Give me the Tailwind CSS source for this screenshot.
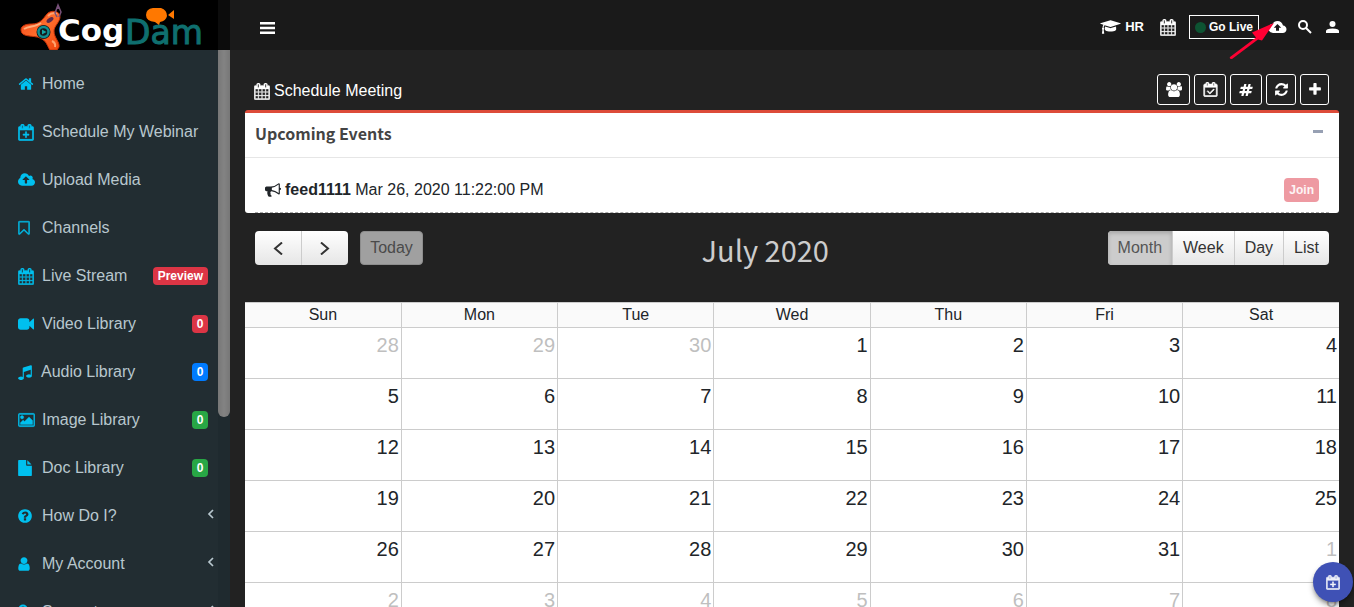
<!DOCTYPE html>
<html lang="en">
<head>
<meta charset="utf-8">
<title>CogDam - Schedule Meeting</title>
<script src="https://cdn.jsdelivr.net/npm/@tailwindcss/browser@4"></script>
</head>
<body class="relative flex h-screen flex-col overflow-hidden bg-[#222222] font-['Liberation_Sans',sans-serif] text-base text-[#212529]">
<svg class="hidden">
  <symbol id="home" viewBox="0 0 1792 1792"><path d="M1472 992v480q0 26-19 45t-45 19h-384v-384h-256v384h-384q-26 0-45-19t-19-45v-480q0-1 .5-3t.5-3l575-474 575 474q1 2 1 6zm223-69l-62 74q-8 9-21 11h-3q-13 0-21-7l-692-577-692 577q-12 8-24 7-13-2-21-11l-62-74q-8-10-7-23.5t11-21.5l719-599q32-26 76-26t76 26l244 204v-195q0-14 9-23t23-9h192q14 0 23 9t9 23v408l219 182q10 8 11 21.5t-7 23.5z"/></symbol>
  <symbol id="cal" viewBox="44 0 1704 1812"><path stroke="currentColor" stroke-width="40" d="M192 1664h288v-288h-288v288zm352 0h320v-288h-320v288zm-352-352h288v-320h-288v320zm352 0h320v-320h-320v320zm-352-384h288v-288h-288v288zm736 736h320v-288h-320v288zm-384-736h320v-288h-320v288zm768 736h288v-288h-288v288zm-384-352h320v-320h-320v320zm-352-864v-288q0-13-9.5-22.5t-22.5-9.5h-64q-13 0-22.5 9.5t-9.5 22.5v288q0 13 9.5 22.5t22.5 9.5h64q13 0 22.5-9.5t9.5-22.5zm736 864h288v-320h-288v320zm-384-384h320v-288h-320v288zm384 0h288v-288h-288v288zm32-480v-288q0-13-9.5-22.5t-22.5-9.5h-64q-13 0-22.5 9.5t-9.5 22.5v288q0 13 9.5 22.5t22.5 9.5h64q13 0 22.5-9.5t9.5-22.5zm384-64v1280q0 52-38 90t-90 38h-1408q-52 0-90-38t-38-90v-1280q0-52 38-90t90-38h128v-96q0-66 47-113t113-47h64q66 0 113 47t47 113v96h384v-96q0-66 47-113t113-47h64q66 0 113 47t47 113v96h128q52 0 90 38t38 90z"/></symbol>
  <symbol id="calplus" viewBox="24 0 1744 1832"><path stroke="currentColor" stroke-width="70" fill-rule="evenodd" d="M1600 256q52 0 90 38t38 90v1280q0 52-38 90t-90 38h-1408q-52 0-90-38t-38-90v-1280q0-52 38-90t90-38h128v-96q0-66 47-113t113-47h64q66 0 113 47t47 113v96h384v-96q0-66 47-113t113-47h64q66 0 113 47t47 113v96zM192 640v1024h1408v-1024zM448 128v320h128v-320zM1216 128v320h128v-320zM832 832h128v256h256v128h-256v256h-128v-256h-256v-128h256z"/></symbol>
  <symbol id="calcheck" viewBox="24 0 1744 1832"><path stroke="currentColor" stroke-width="70" fill-rule="evenodd" d="M1600 256q52 0 90 38t38 90v1280q0 52-38 90t-90 38h-1408q-52 0-90-38t-38-90v-1280q0-52 38-90t90-38h128v-96q0-66 47-113t113-47h64q66 0 113 47t47 113v96h384v-96q0-66 47-113t113-47h64q66 0 113 47t47 113v96zM192 640v1024h1408v-1024zM448 128v320h128v-320zM1216 128v320h128v-320zM1303 864l46 46q19 22 0 45l-506 506q-22 19-45 0l-294-294q-19-22 0-45l46-46q22-19 45 0l225 225 437-437q22-19 46 0z"/></symbol>
  <symbol id="cloud" viewBox="-64 0 1920 1792"><path d="M1216 864q0-14-9-23l-352-352q-9-9-23-9t-23 9l-351 351q-10 12-10 24 0 14 9 23t23 9h224v352q0 13 9.500 22.500t22.500 9.500h192q13 0 22.500-9.500t9.500-22.500v-352h224q13 0 22.500-9.500t9.500-22.500zm640 288q0 159-112.500 271.500t-271.500 112.500h-1088q-185 0-316.500-131.500t-131.500-316.500q0-130 70-240t188-165q-2-30-2-43 0-212 150-362t362-150q156 0 285.500 87t188.500 231q71-62 166-62 106 0 181 75t75 181q0 76-41 138 130 31 213.500 135.500t83.500 238.500z"/></symbol>
  <symbol id="bookmark" viewBox="236 0 1320 1792"><path stroke="currentColor" stroke-width="40" d="M1408 256h-1024v1242l423-406 89-85 89 85 423 406v-1242zm12-128q23 0 44 9 33 13 52.500 41t19.500 62v1289q0 34-19.500 62t-52.500 41q-19 8-44 8-48 0-83-32l-441-424-441 424q-36 33-83 33-23 0-44-9-33-13-52.500-41t-19.500-62v-1289q0-34 19.500-62t52.500-41q21-9 44-9h1048z"/></symbol>
  <symbol id="video" viewBox="0 0 1792 1792"><path d="M1792 352v1088q0 42-39 59-13 5-25 5-27 0-45-19l-403-403v166q0 119-84.500 203.500t-203.500 84.500h-704q-119 0-203.500-84.500t-84.500-203.500v-704q0-119 84.500-203.500t203.500-84.500h704q119 0 203.500 84.500t84.500 203.500v165l403-402q18-19 45-19 12 0 25 5 39 17 39 59z"/></symbol>
  <symbol id="music" viewBox="128 0 1536 1792"><path d="M1664 224v1120q0 50-34 89t-86 60.500-103.500 32-96.500 10.500-96.500-10.500-103.500-32-86-60.500-34-89 34-89 86-60.500 103.500-32 96.500-10.500q105 0 192 39v-537l-768 237v709q0 50-34 89t-86 60.500-103.500 32-96.500 10.500-96.500-10.500-103.500-32-86-60.500-34-89 34-89 86-60.500 103.500-32 96.500-10.500q105 0 192 39v-967q0-31 19-56.500t49-35.500l832-256q12-4 28-4 40 0 68 28t28 68z"/></symbol>
  <symbol id="image" viewBox="-84 0 1960 1792"><path stroke="currentColor" stroke-width="40" d="M576 576q0 80-56 136t-136 56-136-56-56-136 56-136 136-56 136 56 56 136zm1024 384v448h-1408v-192l320-320 160 160 512-512zm96-704h-1600q-13 0-22.500 9.500t-9.500 22.500v1216q0 13 9.500 22.500t22.500 9.500h1600q13 0 22.500-9.500t9.500-22.500v-1216q0-13-9.500-22.500t-22.500-9.500zm160 32v1216q0 66-47 113t-113 47h-1600q-66 0-113-47t-47-113v-1216q0-66 47-113t113-47h1600q66 0 113 47t47 113z"/></symbol>
  <symbol id="file" viewBox="128 0 1536 1792"><path d="M1152 512v-472q22 14 36 28l408 408q14 14 28 36h-472zm-128 32q0 40 28 68t68 28h544v1056q0 40-28 68t-68 28h-1344q-40 0-68-28t-28-68v-1600q0-40 28-68t68-28h800v544z"/></symbol>
  <symbol id="question" viewBox="128 0 1536 1792"><path d="M1024 1376v-192q0-14-9-23t-23-9h-192q-14 0-23 9t-9 23v192q0 14 9 23t23 9h192q14 0 23-9t9-23zm256-672q0-88-55.500-163t-138.500-116-170-41q-243 0-371 213-15 24 8 42l132 100q7 6 19 6 16 0 25-12 53-68 86-92 34-24 86-24 48 0 85.500 26t37.500 59q0 38-20 61t-68 45q-63 28-115.500 86.500t-52.500 125.500v36q0 14 9 23t23 9h192q14 0 23-9t9-23q0-19 21.500-49.500t54.500-49.500q32-18 49-28.500t46-35 44.500-48 28-60.500 12.500-81zm384 192q0 209-103 385.500t-279.500 279.500-385.500 103-385.500-103-279.500-279.500-103-385.500 103-385.500 279.500-279.500 385.500-103 385.500 103 279.500 279.500 103 385.500z"/></symbol>
  <symbol id="user" viewBox="256 0 1280 1792"><path d="M1536 1399q0 109-62.500 187t-150.500 78h-854q-88 0-150.500-78t-62.500-187q0-85 8.500-160.500t31.500-152 58.500-131 94-89 134.500-34.500q131 128 313 128t313-128q76 0 134.500 34.500t94 89 58.500 131 31.500 152 8.500 160.500zm-256-887q0 159-112.500 271.500t-271.500 112.500-271.500-112.500-112.500-271.500 112.500-271.500 271.500-112.500 271.500 112.500 112.500 271.500z"/></symbol>
  <symbol id="refresh" viewBox="128 0 1536 1792"><path d="M1639 1056q0 5-1 7-64 268-268 434.500t-478 166.500q-146 0-282.500-55t-243.500-157l-129 129q-19 19-45 19t-45-19-19-45v-448q0-26 19-45t45-19h448q26 0 45 19t19 45-19 45l-137 137q71 66 161 102t187 36q134 0 250-65t186-179q11-17 53-117 8-23 30-23h192q13 0 22.500 9.500t9.500 22.500zm25-800v448q0 26-19 45t-45 19h-448q-26 0-45-19t-19-45 19-45l138-138q-148-137-349-137-134 0-250 65t-186 179q-11 17-53 117-8 23-30 23h-199q-13 0-22.500-9.500t-9.500-22.500v-7q65-268 270-434.500t480-166.500q146 0 284 55.500t245 156.500l130-129q19-19 45-19t45 19 19 45z"/></symbol>
  <symbol id="plus" viewBox="192 0 1408 1792"><path d="M1600 736v192q0 40-28 68t-68 28h-416v416q0 40-28 68t-68 28h-192q-40 0-68-28t-28-68v-416h-416q-40 0-68-28t-28-68v-192q0-40 28-68t68-28h416v-416q0-40 28-68t68-28h192q40 0 68 28t28 68v416h416q40 0 68 28t28 68z"/></symbol>
  <symbol id="hash" viewBox="0 0 1792 1792"><path d="M991 1024l64-256h-254l-64 256h254zm768-504l-56 224q-7 24-31 24h-327l-64 256h311q15 0 25 12 10 14 6 28l-56 224q-5 24-31 24h-327l-81 328q-7 24-31 24h-224q-16 0-26-12-9-12-6-28l78-312h-254l-81 328q-7 24-31 24h-225q-15 0-25-12-9-12-6-28l78-312h-311q-15 0-25-12-9-12-6-28l56-224q7-24 31-24h327l64-256h-311q-15 0-25-12-10-14-6-28l56-224q5-24 31-24h327l81-328q7-24 32-24h224q15 0 25 12 9 12 6 28l-78 312h254l81-328q7-24 32-24h224q15 0 25 12 9 12 6 28l-78 312h311q15 0 25 12 9 12 6 28z"/></symbol>
  <symbol id="users" viewBox="-64 0 1920 1792"><path d="M529 896q-162 5-265 128h-134q-82 0-138-40.500t-56-118.500q0-353 124-353 6 0 43.500 21t97.500 42.500 119 21.500q67 0 133-23-5 37-5 66 0 159 93 293zm1071 637q0 120-73 189.500t-194 69.500h-874q-121 0-194-69.500t-73-189.500q0-53 3.500-103.500t14-109 26.500-108.500 43-97.500 62-81 85.500-53.500 111.500-20q10 0 43 21.500t73 48 107 48 135 21.500 135-21.500 107-48 73-48 43-21.500q61 0 111.500 20t85.500 53.500 62 81 43 97.500 26.500 108.500 14 109 3.500 103.500zm-1024-1277q0 106-75 181t-181 75-181-75-75-181 75-181 181-75 181 75 75 181zm704 384q0 159-112.500 271.500t-271.500 112.500-271.500-112.500-112.500-271.500 112.500-271.500 271.500-112.500 271.500 112.500 112.500 271.500zm576 225q0 78-56 118.500t-138 40.500h-134q-103-123-265-128 93-134 93-293 0-29-5-66 66 23 133 23 59 0 119-21.500t97.500-42.500 43.500-21q124 0 124 353zm-128-609q0 106-75 181t-181 75-181-75-75-181 75-181 181-75 181 75 75 181z"/></symbol>
  <symbol id="horn" viewBox="0 0 1792 1792"><path d="M1664 640q53 0 90.500 37.500t37.500 90.500-37.500 90.500-90.500 37.500v384q0 52-38 90t-90 38q-417-347-812-380-58 19-91 66t-31 100.500 40 92.500q-20 33-23 65.500t6 58 33.500 55 48 50 61.500 50.500q-29 58-111.500 83t-168.500 11.500-132-55.500q-7-23-29.500-87.500t-32-94.500-23-89-15-101 3.500-98.500 22-110.500h-122q-66 0-113-47t-47-113v-192q0-66 47-113t113-47h480q435 0 896-384 52 0 90 38t38 90v384zm-128 604v-954q-394 302-768 343v270q377 42 768 341z"/></symbol>
  <symbol id="cap" viewBox="0 0 2304 1792"><path d="M1774 836l18 320q4 69-82 128t-235 93.500-323 34.500-323-34.500-235-93.500-82-128l18-320 574 181q22 7 48 7t48-7zm530-324q0 23-22 31l-1120 352q-4 1-10 1t-10-1l-652-206q-43 34-71 111.500t-34 178.500q63 36 63 109 0 69-58 107l58 433q2 14-8 25-9 11-24 11h-192q-15 0-24-11-10-11-8-25l58-433q-58-38-58-107 0-73 65-111 11-207 98-330l-333-104q-22-8-22-31t22-31l1120-352q4-1 10-1t10 1l1120 352q22 8 22 31z"/></symbol>
</svg>

<header class="flex h-[50px] shrink-0 items-center bg-[#1a1a1a] text-white">
  <a href="#" aria-label="CogDam" class="flex h-full w-[230px] shrink-0 bg-black">
    <svg class="h-[50px] w-[230px]" viewBox="0 0 230 50">
      <defs>
        <linearGradient id="fid" x1="0" y1="0" x2="1" y2="1"><stop offset="0" stop-color="#f5481c"/><stop offset=".5" stop-color="#ff6d2c"/><stop offset="1" stop-color="#f0440c"/></linearGradient>
      </defs>
      <path d="M218 0h12v50h-12z" fill="#0c0c0c"/>
      <path d="M21 30C21 25 27 24 32 24C40 24 43 19 47 14C50 10 60 10 60 17C60 22 54 26 54 31C54 38 60 42 59 47L57 50H50C47 46 47 41 40 38C34 35 21 38 21 30Z" fill="url(#fid)" stroke="#c63208"/>
      <path d="M24 29C29 26 36 27 41 23" fill="none" stroke="#ffae7c" stroke-width="2"/>
      <path d="M48 16Q52 12 57 14M52 41Q56 43 55 47" fill="none" stroke="#ffa26e" stroke-width="2"/>
      <ellipse cx="50" cy="20" rx="4" ry="2" transform="rotate(-35 50 20)" fill="#5b2a4a"/>
      <path d="M57 17L55 13L58 5L61 12L59 17M58 5V9" fill="none" stroke="#765078" stroke-width="1.500"/>
      <circle cx="43.500" cy="32" r="7" fill="#10191c"/>
      <circle cx="43.500" cy="32" r="5" fill="#151a1c" stroke="#128e91" stroke-width="2.500"/>
      <path d="M42 29.500l4.500 2.500-4.500 2.500z" fill="#14a5a5"/>
      <text x="58" y="41" class="fill-white font-['DejaVu_Sans',sans-serif] text-[31px] font-bold">Cog</text>
      <text x="125" y="44" class="fill-[#0f6f6f] stroke-[#0f6f6f] font-['DejaVu_Sans',sans-serif] text-[33px]">Dam</text>
      <path d="M153 8h8q6 2 6 8q-1 5-7 6l-1 3-4-3q-9-1-9-7 0-6 7-7zM168 15l6-5v9z" fill="#ff7800"/>
    </svg>
  </a>
  <button aria-label="Toggle menu" class="ml-[30px] pt-[6px]"><svg class="block h-3 w-[15px]" viewBox="0 0 15 12" fill="white"><path d="M0 0h15v2.500H0zM0 4.700h15v2.500H0zM0 9.500h15v2.500H0z"/></svg></button>
  <nav class="ml-auto flex items-center pt-1 pr-[15px] text-[13px] font-bold">
    <a href="#" class="flex items-center gap-1"><svg class="h-4 w-[21px]" fill="currentColor"><use href="#cap"/></svg>HR</a>
    <a href="#" aria-label="Calendar" class="ml-4"><svg class="h-[17px] w-4" fill="currentColor"><use href="#cal"/></svg></a>
    <button class="ml-[13px] flex h-6 w-[70px] items-center justify-between border border-white px-[5px] text-xs font-bold"><span class="size-[11px] rounded-full bg-[#0d5332]"></span>Go Live</button>
    <a href="#" aria-label="Upload" class="ml-[9px]"><svg class="h-[18px] w-[19px]" viewBox="0 0 24 24" fill="currentColor"><path d="M19.350 10.040C18.670 6.590 15.640 4 12 4 9.110 4 6.600 5.640 5.350 8.040 2.340 8.360 0 10.910 0 14c0 3.310 2.690 6 6 6h13c2.760 0 5-2.240 5-5 0-2.640-2.050-4.780-4.650-4.960zM14 13v4h-4v-4H7l5-5 5 5h-3z"/></svg></a>
    <button aria-label="Search" class="ml-[11px]"><svg class="size-[14px]" viewBox="0 0 14 14" fill="none" stroke="currentColor" stroke-width="2"><circle cx="5" cy="5" r="4"/><path d="M8 8l5 5"/></svg></button>
    <button aria-label="Account" class="ml-[14px]"><svg class="h-3 w-[13px]" viewBox="0 0 13 12" fill="currentColor"><circle cx="6.500" cy="3" r="3"/><path d="M0 12v-2q0-2.500 6.500-2.500t6.500 2.500v2z"/></svg></button>
  </nav>
</header>

<div class="flex min-h-0 flex-1">
  <aside class="flex w-[230px] shrink-0 overflow-hidden bg-[#222d32]">
    <nav class="min-w-0 flex-1 overflow-hidden pt-[10px] text-[#b8c7ce]">
      <a href="#" class="flex h-12 items-center gap-2 pl-[18px] pr-[10px]"><svg class="h-4 w-4 text-[#00c0ef]" fill="currentColor"><use href="#home"/></svg>Home</a>
      <a href="#" class="flex h-12 items-center gap-2 pl-[18px] pr-[10px]"><svg class="h-[17px] w-4 text-[#00c0ef]" fill="currentColor"><use href="#calplus"/></svg>Schedule My Webinar</a>
      <a href="#" class="flex h-12 items-center gap-[7px] pl-[18px] pr-[10px]"><svg class="h-4 w-[17px] text-[#00c0ef]" fill="currentColor"><use href="#cloud"/></svg>Upload Media</a>
      <a href="#" class="flex h-12 items-center gap-3 pl-[18px] pr-[10px]"><svg class="h-4 w-3 text-[#00c0ef]" fill="currentColor"><use href="#bookmark"/></svg>Channels</a>
      <a href="#" class="flex h-12 items-center gap-2 pl-[18px] pr-[10px]"><svg class="h-[17px] w-4 text-[#00c0ef]" fill="currentColor"><use href="#cal"/></svg>Live Stream<span class="ml-auto h-[18px] rounded bg-[#dc3545] px-[5px] text-xs leading-[18px] font-bold text-white">Preview</span></a>
      <a href="#" class="flex h-12 items-center gap-2 pl-[18px] pr-[10px]"><svg class="h-4 w-4 text-[#00c0ef]" fill="currentColor"><use href="#video"/></svg>Video Library<span class="ml-auto h-[18px] w-4 rounded bg-[#dc3545] text-center text-xs leading-[18px] font-bold text-white">0</span></a>
      <a href="#" class="flex h-12 items-center gap-[9px] pl-[18px] pr-[10px]"><svg class="h-4 w-[14px] text-[#00c0ef]" fill="currentColor"><use href="#music"/></svg>Audio Library<span class="ml-auto h-[18px] w-4 rounded bg-[#007bff] text-center text-xs leading-[18px] font-bold text-white">0</span></a>
      <a href="#" class="flex h-12 items-center gap-[7px] pl-[18px] pr-[10px]"><svg class="h-4 w-[17px] text-[#00c0ef]" fill="currentColor"><use href="#image"/></svg>Image Library<span class="ml-auto h-[18px] w-4 rounded bg-[#28a745] text-center text-xs leading-[18px] font-bold text-white">0</span></a>
      <a href="#" class="flex h-12 items-center gap-[10px] pl-[18px] pr-[10px]"><svg class="h-4 w-[14px] text-[#00c0ef]" fill="currentColor"><use href="#file"/></svg>Doc Library<span class="ml-auto h-[18px] w-4 rounded bg-[#28a745] text-center text-xs leading-[18px] font-bold text-white">0</span></a>
      <a href="#" class="flex h-12 items-center gap-[10px] pl-[18px] pr-1"><svg class="h-4 w-[14px] text-[#00c0ef]" fill="currentColor"><use href="#question"/></svg>How Do I?<svg class="mb-1 ml-auto h-[10px] w-[7px]" viewBox="0 0 7 10" fill="none" stroke="currentColor" stroke-width="1.700"><path d="M6 1L2 5l4 4"/></svg></a>
      <a href="#" class="flex h-12 items-center gap-3 pl-[18px] pr-1"><svg class="h-4 w-3 text-[#00c0ef]" fill="currentColor"><use href="#user"/></svg>My Account<svg class="mb-1 ml-auto h-[10px] w-[7px]" viewBox="0 0 7 10" fill="none" stroke="currentColor" stroke-width="1.700"><path d="M6 1L2 5l4 4"/></svg></a>
      <a href="#" class="flex h-12 items-center gap-[14px] pl-[18px] pr-1"><svg class="h-4 w-[10px] text-[#00c0ef]" viewBox="0 0 10 16" fill="none" stroke="currentColor" stroke-width="2"><circle cx="5" cy="5" r="3.500"/><path d="M5 8v7"/></svg>Support<svg class="mb-1 ml-auto h-[10px] w-[7px]" viewBox="0 0 7 10" fill="none" stroke="currentColor" stroke-width="1.700"><path d="M6 1L2 5l4 4"/></svg></a>
    </nav>
    <div class="w-3 shrink-0 bg-[#1f2a2f]"><div class="h-[367px] rounded-b-md bg-linear-to-r from-[#777777] via-[#838383] to-[#777777]"></div></div>
  </aside>

  <main class="min-w-0 flex-1 overflow-hidden pl-[15px] pr-[15px] pt-6">
    <div class="flex h-9 items-start justify-between pl-[9px] pr-[10px]">
      <h1 class="flex items-center gap-1 pt-[5px] text-white"><svg class="h-[17px] w-4" fill="currentColor"><use href="#cal"/></svg>Schedule Meeting</h1>
      <div class="flex gap-1 text-white">
        <button aria-label="Groups" class="flex h-[31px] w-[33px] items-center justify-center rounded-[3px] border border-white"><svg class="h-[15px] w-4" fill="currentColor"><use href="#users"/></svg></button>
        <button aria-label="Schedule" class="flex h-[31px] w-8 items-center justify-center rounded-[3px] border border-white"><svg class="h-[15px] w-[15px]" fill="currentColor"><use href="#calcheck"/></svg></button>
        <button aria-label="Channels" class="flex h-[31px] w-8 items-center justify-center rounded-[3px] border border-white"><svg class="h-[14px] w-[14px]" fill="currentColor"><use href="#hash"/></svg></button>
        <button aria-label="Refresh" class="flex h-[31px] w-[30px] items-center justify-center rounded-[3px] border border-white"><svg class="h-[15px] w-[13px]" fill="currentColor"><use href="#refresh"/></svg></button>
        <button aria-label="Add" class="flex h-[31px] w-[29px] items-center justify-center rounded-[3px] border border-white"><svg class="h-[15px] w-3" fill="currentColor"><use href="#plus"/></svg></button>
      </div>
    </div>

    <section class="rounded-[3px] border-t-[3px] border-[#dd4b39] bg-white">
      <div class="flex h-[45px] items-center justify-between border-b border-[#e6e6e6] pb-1 pl-[10px] pr-4">
        <h2 class="font-['Noto_Sans_CJK_SC',sans-serif] text-base font-bold text-[#444444]">Upcoming Events</h2>
        <button aria-label="Collapse" class="mb-1 h-[3px] w-[10px] bg-[#97a0b3]"></button>
      </div>
      <div class="mx-[10px] flex h-[55px] items-center border-b border-dashed border-[#aaaaaa] px-[10px] pt-[9px]">
        <svg class="mr-1 h-4 w-4" fill="currentColor"><use href="#horn"/></svg>
        <p><strong>feed1111</strong> Mar 26, 2020 11:22:00 PM</p>
        <button class="ml-auto h-6 rounded bg-[#ee9aa2] px-[5px] text-xs font-bold text-white/90">Join</button>
      </div>
    </section>

    <div class="mt-[18px] flex h-[34px] items-center justify-between px-[10px] text-[#333333]">
      <div class="flex">
        <div class="flex h-[34px] w-[93px] overflow-hidden rounded bg-linear-to-b from-white to-[#e6e6e6]">
          <button aria-label="Previous month" class="flex flex-1 items-center justify-center border-r border-[#cccccc]"><svg class="h-[13px] w-[10px]" viewBox="0 0 10 13" fill="none" stroke="currentColor" stroke-width="2"><path d="M9 .5L2 6.500l7 6"/></svg></button>
          <button aria-label="Next month" class="flex flex-1 items-center justify-center"><svg class="h-[13px] w-[10px]" viewBox="0 0 10 13" fill="none" stroke="currentColor" stroke-width="2"><path d="M1 .5l7 6-7 6"/></svg></button>
        </div>
        <button class="ml-3 h-[34px] w-[63px] rounded border border-[#8d8d8d] bg-[#a0a0a0] text-[#4a4a4a]">Today</button>
      </div>
      <h2 class="pt-[2px] font-['Noto_Sans_CJK_SC',sans-serif] text-[29px] leading-[34px] text-[#cccccc]">July 2020</h2>
      <div class="flex">
        <div class="flex h-[34px] divide-x divide-[#cccccc] overflow-hidden rounded bg-linear-to-b from-white to-[#e6e6e6]">
          <button class="bg-[#cccccc] px-[10px] text-[#555555] shadow-[inset_0_2px_4px_rgba(0,0,0,0.2)]">Month</button>
          <button class="px-[10px]">Week</button>
          <button class="px-[10px]">Day</button>
          <button class="px-[10px]">List</button>
        </div>
      </div>
    </div>

    <table class="mt-[37px] w-full table-fixed border-collapse bg-white text-right text-xl">
      <thead class="bg-[#fafafa] text-center text-base">
        <tr class="h-[25px] divide-x divide-[#cccccc] border-y border-[#cccccc]"><th class="p-0 font-normal leading-6">Sun</th><th class="p-0 font-normal leading-6">Mon</th><th class="p-0 font-normal leading-6">Tue</th><th class="p-0 font-normal leading-6">Wed</th><th class="p-0 font-normal leading-6">Thu</th><th class="p-0 font-normal leading-6">Fri</th><th class="p-0 font-normal leading-6">Sat</th></tr>
      </thead>
      <tbody class="align-top">
        <tr class="h-[51px] divide-x divide-[#cccccc] border-b border-[#cccccc]"><td class="pt-[3px] pr-[2px] text-[#bfbfbf]">28</td><td class="pt-[3px] pr-[2px] text-[#bfbfbf]">29</td><td class="pt-[3px] pr-[2px] text-[#bfbfbf]">30</td><td class="pt-[3px] pr-[2px]">1</td><td class="pt-[3px] pr-[2px]">2</td><td class="pt-[3px] pr-[2px]">3</td><td class="pt-[3px] pr-[2px]">4</td></tr>
        <tr class="h-[51px] divide-x divide-[#cccccc] border-b border-[#cccccc]"><td class="pt-[3px] pr-[2px]">5</td><td class="pt-[3px] pr-[2px]">6</td><td class="pt-[3px] pr-[2px]">7</td><td class="pt-[3px] pr-[2px]">8</td><td class="pt-[3px] pr-[2px]">9</td><td class="pt-[3px] pr-[2px]">10</td><td class="pt-[3px] pr-[2px]">11</td></tr>
        <tr class="h-[51px] divide-x divide-[#cccccc] border-b border-[#cccccc]"><td class="pt-[3px] pr-[2px]">12</td><td class="pt-[3px] pr-[2px]">13</td><td class="pt-[3px] pr-[2px]">14</td><td class="pt-[3px] pr-[2px]">15</td><td class="pt-[3px] pr-[2px]">16</td><td class="pt-[3px] pr-[2px]">17</td><td class="pt-[3px] pr-[2px]">18</td></tr>
        <tr class="h-[51px] divide-x divide-[#cccccc] border-b border-[#cccccc]"><td class="pt-[3px] pr-[2px]">19</td><td class="pt-[3px] pr-[2px]">20</td><td class="pt-[3px] pr-[2px]">21</td><td class="pt-[3px] pr-[2px]">22</td><td class="pt-[3px] pr-[2px]">23</td><td class="pt-[3px] pr-[2px]">24</td><td class="pt-[3px] pr-[2px]">25</td></tr>
        <tr class="h-[51px] divide-x divide-[#cccccc] border-b border-[#cccccc]"><td class="pt-[3px] pr-[2px]">26</td><td class="pt-[3px] pr-[2px]">27</td><td class="pt-[3px] pr-[2px]">28</td><td class="pt-[3px] pr-[2px]">29</td><td class="pt-[3px] pr-[2px]">30</td><td class="pt-[3px] pr-[2px]">31</td><td class="pt-[3px] pr-[2px] text-[#bfbfbf]">1</td></tr>
        <tr class="h-[51px] divide-x divide-[#cccccc] border-b border-[#cccccc] text-[#bfbfbf]"><td class="pt-[3px] pr-[2px]">2</td><td class="pt-[3px] pr-[2px]">3</td><td class="pt-[3px] pr-[2px]">4</td><td class="pt-[3px] pr-[2px]">5</td><td class="pt-[3px] pr-[2px]">6</td><td class="pt-[3px] pr-[2px]">7</td><td class="pt-[3px] pr-[2px]">8</td></tr>
      </tbody>
    </table>
  </main>
</div>

<button aria-label="Schedule webinar" class="absolute right-px bottom-[5px] flex size-10 items-center justify-center rounded-full bg-[#3f51b5] text-white/90 shadow-md shadow-black/40"><svg class="h-[15px] w-[14px]" fill="currentColor"><use href="#calplus"/></svg></button>
<svg class="pointer-events-none absolute top-[22px] right-[79px] h-10 w-12" viewBox="0 0 48 40" fill="#ff0033"><path d="M3 35L29 15.500l-4-5L47 1 35 18.500l-4-1L5 37q-3 0-2-2z"/></svg>
</body>
</html>
